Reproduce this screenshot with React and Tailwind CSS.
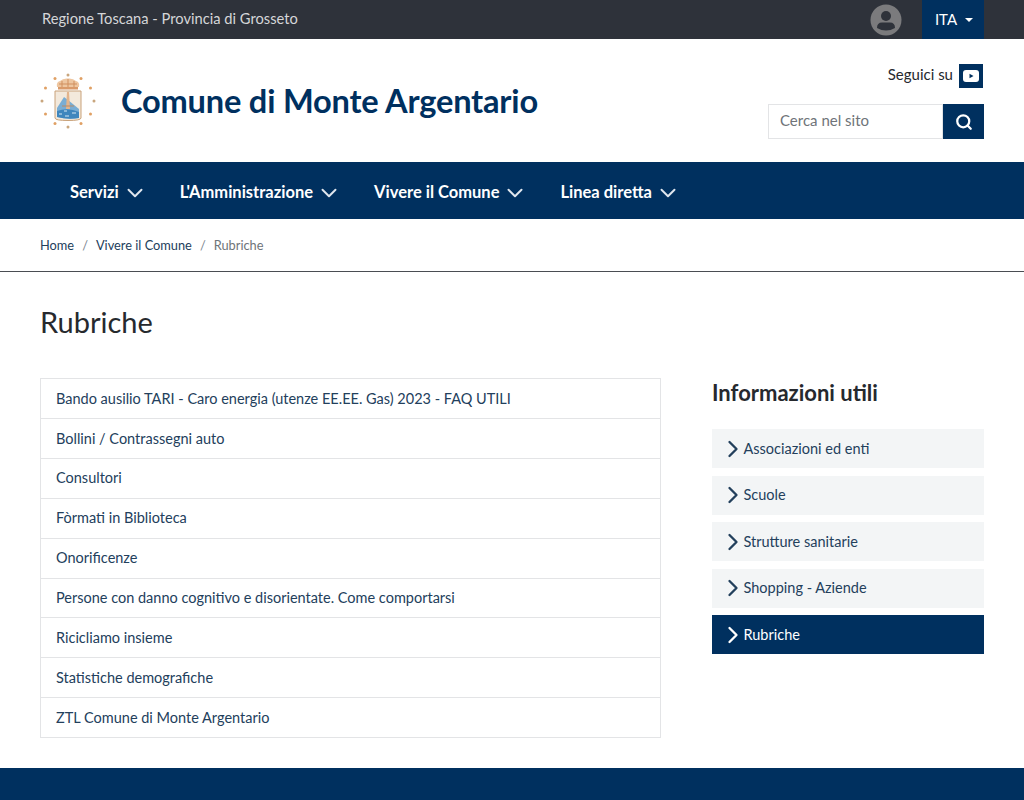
import { ChevronDown, ChevronRight, Search } from 'lucide-react';

const navItems = ['Servizi', "L'Amministrazione", 'Vivere il Comune', 'Linea diretta'];

const rubriche = [
  'Bando ausilio TARI - Caro energia (utenze EE.EE. Gas) 2023 - FAQ UTILI',
  'Bollini / Contrassegni auto',
  'Consultori',
  'Fòrmati in Biblioteca',
  'Onorificenze',
  'Persone con danno cognitivo e disorientate. Come comportarsi',
  'Ricicliamo insieme',
  'Statistiche demografiche',
  'ZTL Comune di Monte Argentario',
];

const info = ['Associazioni ed enti', 'Scuole', 'Strutture sanitarie', 'Shopping - Aziende', 'Rubriche'];

const stars = Array.from({ length: 12 }, (_, i) => {
  const a = (i * Math.PI) / 6;
  return [28 + 26 * Math.sin(a), 28 - 26 * Math.cos(a)];
});

const Stemma = () => (
  <svg width="56" height="56" viewBox="0 0 56 56" className="shrink-0">
    {stars.map(([x, y], i) => (
      <circle key={i} cx={x} cy={y} r="1.5" fill={i % 3 === 0 ? '#c9a67e' : '#e0a064'} />
    ))}
    {/* corona */}
    <path d="M17 14 Q16 9 20 8 Q23 5 28 5.500 Q33 5 36 8 Q40 9 39 14 Z" fill="#eec6a0" />
    <path d="M19 11 H37 M22 8 V14 M28 6 V14 M34 8 V14" stroke="#d08f5e" strokeWidth="1" />
    <rect x="18" y="14" width="20" height="2.500" fill="#d99a6a" />
    {/* scudo */}
    <path d="M15 18 H41 V45 Q41 47.500 28 47.500 Q15 47.500 15 45 Z" fill="#f3e9dc" stroke="#c9a27a" />
    <path d="M17 44 V35 L24 24 L28 27 L39 36 V45 Q28 47 17 44 Z" fill="#79add4" />
    <path d="M17 38 Q28 34 39 39 V45 Q28 47 17 44 Z" fill="#3f86bd" />
    <path d="M19 41 H22 M25 43 H29 M32 40 H36 M24 38 H27" stroke="#d6e8f4" strokeWidth="1" />
    <path d="M27 19 L29 19 L30 36 L26 36 Z" fill="#e3b48c" />
    <path d="M22 33 H34" stroke="#b98a64" strokeWidth="1" />
  </svg>
);

const YoutubeBox = () => (
  <span className="flex h-6 w-6 items-center justify-center bg-[#00305f]">
    <svg width="16" height="12" viewBox="0 0 16 12">
      <rect width="16" height="12" rx="3" fill="#fff" />
      <path d="M6.500 3.800 L10.500 6 L6.500 8.200 Z" fill="#00305f" />
    </svg>
  </span>
);

const UserIcon = () => (
  <svg width="32" height="32" viewBox="0 0 32 32">
    <circle cx="16" cy="16" r="15.500" fill="#7b7b7d" />
    <circle cx="16" cy="12" r="5" fill="#2e323a" />
    <path d="M7 24 Q7 18.500 12 18.500 H20 Q25 18.500 25 24 Q16 29 7 24 Z" fill="#2e323a" />
  </svg>
);

export default function App() {
  return (
    <div className="min-h-[800px] bg-white font-['Lato',sans-serif] text-[#23405c] overflow-hidden">
      <div className="flex h-[39px] items-center justify-between bg-[#2e323a] pl-[42px] pr-10">
        <span className="pb-[2px] text-[14.7px] text-[#d5d6d8]">Regione Toscana - Provincia di Grosseto</span>
        <div className="flex h-full items-center">
          <UserIcon />
          <div className="ml-[20px] flex h-full w-[62px] items-center justify-center gap-2 bg-[#00305f] pl-[2px] text-[15px] text-white">
            ITA
            <span className="h-0 w-0 border-x-[4px] border-t-[4px] border-x-transparent border-t-white" />
          </div>
        </div>
      </div>

      <header className="flex h-[123px] items-center justify-between pl-10 pr-10">
        <div className="flex items-center gap-[25px]">
          <Stemma />
          <h1 className="pt-[2px] text-[32.6px] font-bold tracking-[-0.2px] text-[#00305f]">Comune di Monte Argentario</h1>
        </div>
        <div className="flex flex-col items-end gap-[16px] pt-[2px]">
          <div className="mr-[1px] flex h-[24px] items-center gap-[6px] text-[15px] text-[#26292e]">
            <span className="pb-[3px]">Seguici su</span>
            <YoutubeBox />
          </div>
          <div className="flex h-[35px]">
            <div className="flex w-[175px] items-center border border-[#e3e4e6] pb-[2px] pl-[11px] text-[15px] text-[#6f7479]">Cerca nel sito</div>
            <div className="flex w-[41px] items-center justify-center bg-[#00305f] text-white">
              <Search size={18} strokeWidth={3} />
            </div>
          </div>
        </div>
      </header>

      <nav className="flex h-[57px] items-center gap-[32px] bg-[#00305f] pl-[70px] pt-[3px]">
        {navItems.map((item) => (
          <div key={item} className="flex items-center gap-[3px] text-[16.5px] font-bold text-white">
            {item}
            <ChevronDown size={26} strokeWidth={1.8} className="mt-[1px] text-[#dfe6ee]" />
          </div>
        ))}
      </nav>

      <div className="flex h-[53px] items-center gap-[8px] border-b border-[#4a4d52] pl-10 pt-[2px] text-[12.8px]">
        <span>Home</span>
        <span className="text-[#7b8590]">/</span>
        <span>Vivere il Comune</span>
        <span className="text-[#7b8590]">/</span>
        <span className="text-[#6f7479]">Rubriche</span>
      </div>

      <main className="px-10">
        <h2 className="mt-[29px] text-[29px] leading-[42px] text-[#26292e]">Rubriche</h2>
        <div className="mt-[35px] flex justify-between">
          <ul className="h-[360px] w-[621px] border border-[#e3e4e6]">
            {rubriche.map((r, i) => (
              <li
                key={r}
                className={`flex items-center pl-[15px] text-[14.5px] ${i > 0 ? 'h-[39.9px] border-t border-[#e3e4e6]' : 'h-[39px]'}`}
              >
                {r}
              </li>
            ))}
          </ul>
          <aside className="w-[272px]">
            <h3 className="mt-[-1px] text-[22px] font-bold leading-[32px] text-[#26292e]">Informazioni utili</h3>
            <div className="mt-[20px] flex flex-col gap-[7.5px]">
              {info.map((item, i) => (
                <div
                  key={item}
                  className={`flex h-[39px] items-center pl-[6.5px] text-[14.5px] ${
                    i === 4 ? 'bg-[#00305f] text-white' : 'bg-[#f3f5f6]'
                  }`}
                >
                  <ChevronRight size={28} strokeWidth={2} className="mr-[-3px]" />
                  {item}
                </div>
              ))}
            </div>
          </aside>
        </div>
      </main>

      <footer className="mt-[30px] h-[32px] bg-[#00305f]" />
    </div>
  );
}
